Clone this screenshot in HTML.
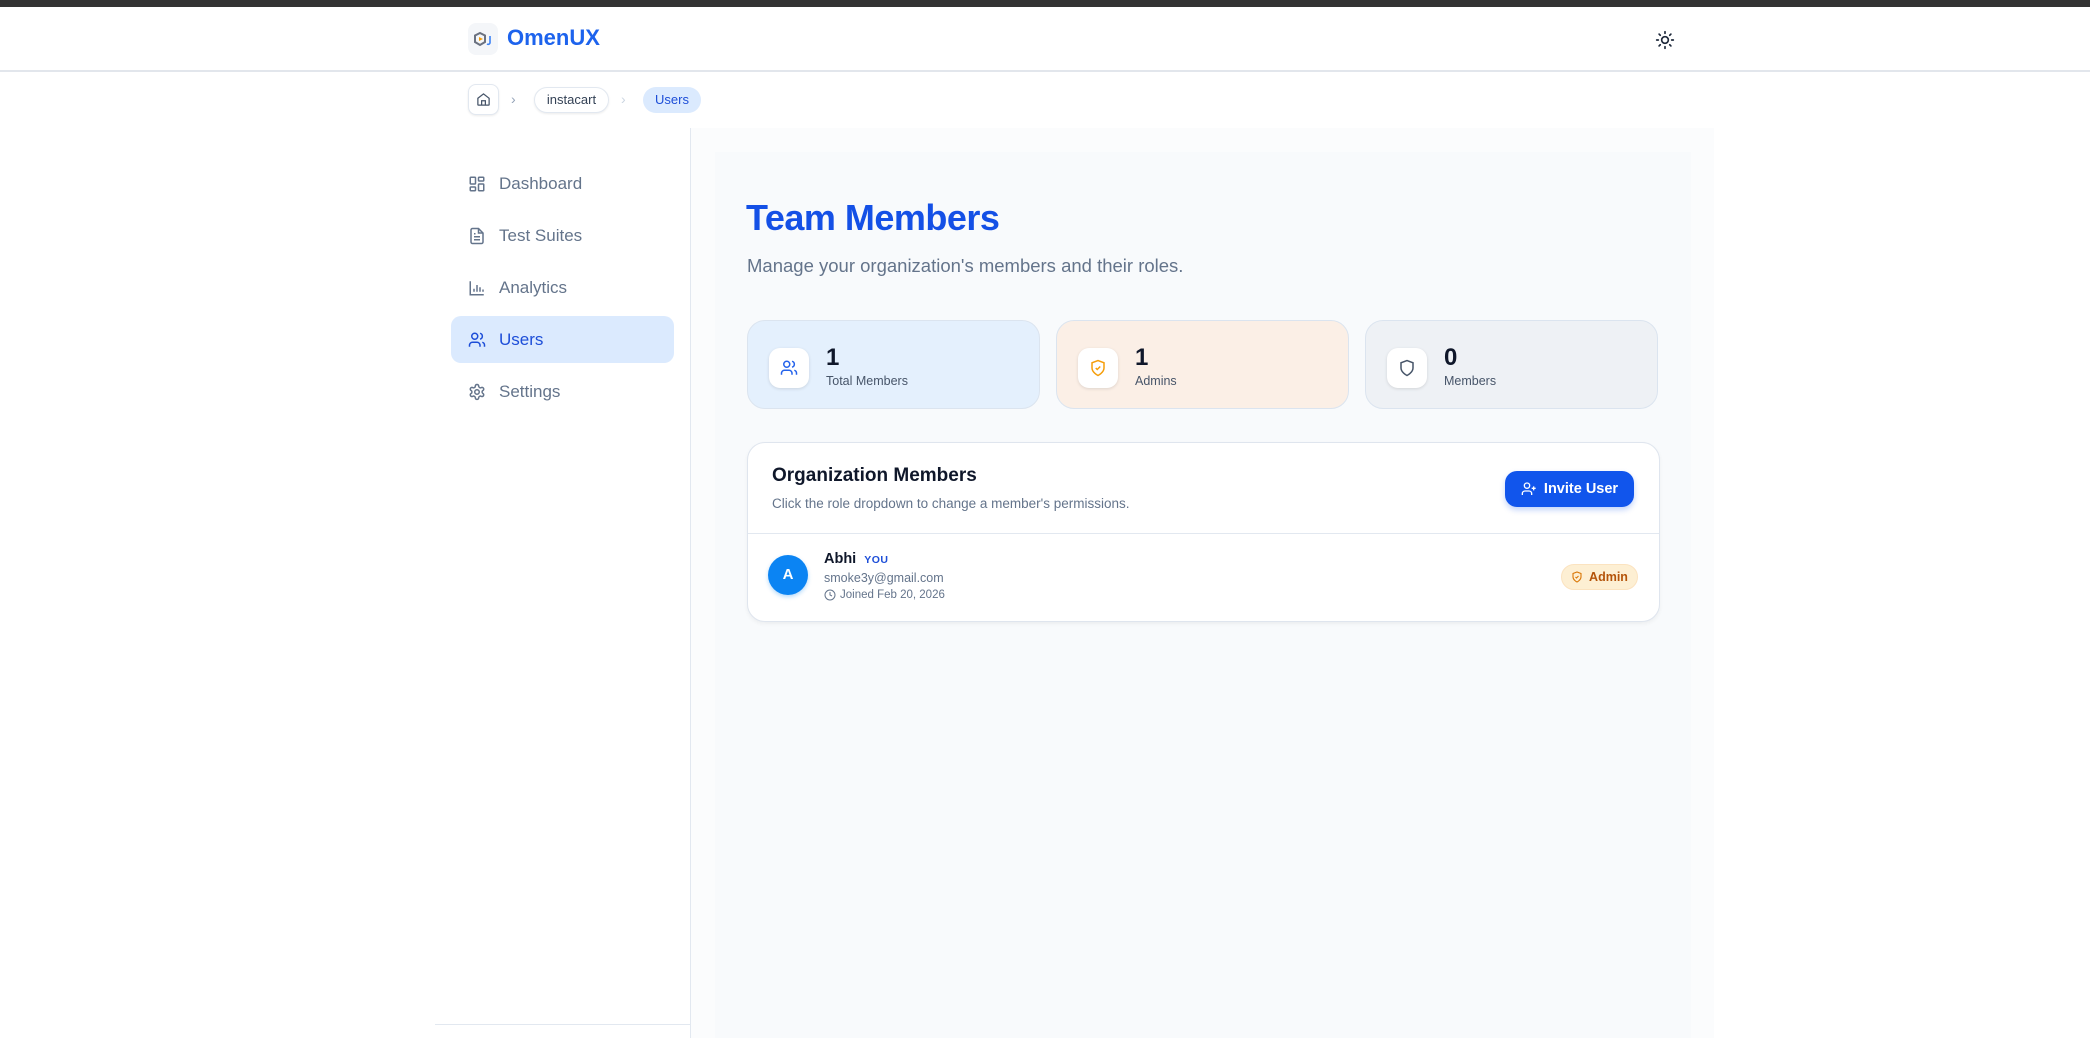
<!DOCTYPE html>
<html><head><meta charset="utf-8"><style>
*{box-sizing:border-box;margin:0;padding:0}
body{width:2090px;height:1038px;overflow:hidden;background:#fff;font-family:"Liberation Sans",sans-serif;position:relative;color:#0f172a}
.a{position:absolute}
svg{display:block}
.nav{position:absolute;left:451px;width:223px;height:47px;border-radius:10px;display:flex;align-items:center;padding-left:17px;font-size:17px;color:#64748b}
.nav svg{margin-right:13px}
.card{position:absolute;top:320px;height:89px;width:293px;border-radius:18px;border:1px solid #dbe4ef}
.ib{position:absolute;left:21px;top:27px;width:40px;height:40px;border-radius:11px;background:#fff;box-shadow:0 1px 3px rgba(0,0,0,.12);display:flex;align-items:center;justify-content:center}
.num{position:absolute;left:78px;top:23px;font-size:24px;font-weight:bold;color:#0f172a}
.lbl{position:absolute;left:78px;top:53px;font-size:12.5px;color:#475569}
</style></head><body>
<div class="a" style="left:0;top:0;width:2090px;height:7px;background:#333"></div>
<div class="a" style="left:0;top:70px;width:2090px;height:2px;background:#e2e6ec"></div>
<div class="a" style="left:468px;top:23px;width:30px;height:32px;border-radius:8px;background:#f4f6f9;display:flex;align-items:center;justify-content:center">
<svg width="22" height="16" viewBox="0 0 22 16"><path d="M8 2 L13 4.5 V11 L8 14 L3 11 V4.5 Z" fill="none" stroke="#6b7280" stroke-width="2"/><path d="M7 6 L11 8 L7 10 Z" fill="#f59e0b"/><path d="M18 5v7a2 2 0 0 1-3 1" fill="none" stroke="#3b82f6" stroke-width="1.6"/></svg></div>
<div class="a" style="left:507px;top:25px;font-size:22px;font-weight:bold;color:#1d63ed">OmenUX</div>
<svg class="a" style="left:1655px;top:30px" width="20" height="20" viewBox="0 0 24 24" fill="none" stroke="#1e293b" stroke-width="2" stroke-linecap="round"><circle cx="12" cy="12" r="4"/><path d="M12 2v2M12 20v2M4.9 4.9l1.4 1.4M17.7 17.7l1.4 1.4M2 12h2M20 12h2M6.3 17.7l-1.4 1.4M19.1 4.9l-1.4 1.4"/></svg>

<div class="a" style="left:468px;top:84px;width:31px;height:31px;border-radius:8px;border:1px solid #e2e8f0;background:#fff;box-shadow:0 1px 2px rgba(0,0,0,.08);display:flex;align-items:center;justify-content:center"><svg width="15" height="15" viewBox="0 0 24 24" fill="none" stroke="#475569" stroke-width="2"><path d="M3 10l9-7 9 7v10a1 1 0 0 1-1 1H4a1 1 0 0 1-1-1z"/><path d="M9 21v-7h6v7"/></svg></div>
<div class="a" style="left:511px;top:91px;color:#94a3b8;font-size:14px">›</div>
<div class="a" style="left:534px;top:87px;width:75px;height:26px;border-radius:13px;border:1px solid #e2e8f0;box-shadow:0 1px 2px rgba(0,0,0,.08);font-size:13px;color:#334155;text-align:center;line-height:24px">instacart</div>
<div class="a" style="left:621px;top:91px;color:#cbd5e1;font-size:14px">›</div>
<div class="a" style="left:643px;top:87px;width:58px;height:26px;border-radius:13px;background:#dbeafe;font-size:13px;color:#1d4ed8;text-align:center;line-height:26px">Users</div>

<div class="a" style="left:690px;top:128px;width:1px;height:910px;background:#e2e8f0"></div>
<div class="a" style="left:435px;top:1024px;width:255px;height:1px;background:#e2e8f0"></div>
<div class="a" style="left:691px;top:128px;width:1023px;height:910px;background:#fbfcfd"></div>
<div class="a" style="left:715px;top:152px;width:976px;height:886px;background:#f8fafc"></div>

<div class="nav" style="top:160px"><svg width="18" height="18" viewBox="0 0 24 24" fill="none" stroke="#64748b" stroke-width="2"><rect x="3" y="3" width="7" height="9" rx="1"/><rect x="14" y="3" width="7" height="5" rx="1"/><rect x="14" y="12" width="7" height="9" rx="1"/><rect x="3" y="16" width="7" height="5" rx="1"/></svg>Dashboard</div>
<div class="nav" style="top:212px"><svg width="18" height="18" viewBox="0 0 24 24" fill="none" stroke="#64748b" stroke-width="2"><path d="M14 2H6a2 2 0 0 0-2 2v16a2 2 0 0 0 2 2h12a2 2 0 0 0 2-2V8z"/><path d="M14 2v6h6M8 13h8M8 17h8M8 9h2"/></svg>Test Suites</div>
<div class="nav" style="top:264px"><svg width="18" height="18" viewBox="0 0 24 24" fill="none" stroke="#64748b" stroke-width="2"><path d="M3 3v18h18M8 17v-4M12 17V8M16 17v-6M20 17v-3"/></svg>Analytics</div>
<div class="nav" style="top:316px;background:#dbeafe;color:#1d4ed8"><svg width="18" height="18" viewBox="0 0 24 24" fill="none" stroke="#1d4ed8" stroke-width="2"><circle cx="9" cy="7" r="4"/><path d="M2 21v-2a4 4 0 0 1 4-4h6a4 4 0 0 1 4 4v2M16 3.1a4 4 0 0 1 0 7.8M22 21v-2a4 4 0 0 0-3-3.9"/></svg>Users</div>
<div class="nav" style="top:368px"><svg width="18" height="18" viewBox="0 0 24 24" fill="none" stroke="#64748b" stroke-width="2"><circle cx="12" cy="12" r="3"/><path d="M12.2 2h-.4a2 2 0 0 0-2 2v.2a2 2 0 0 1-1 1.7l-.4.3a2 2 0 0 1-2 0l-.2-.1a2 2 0 0 0-2.7.7l-.2.4a2 2 0 0 0 .7 2.7l.2.1a2 2 0 0 1 1 1.7v.5a2 2 0 0 1-1 1.7l-.2.1a2 2 0 0 0-.7 2.7l.2.4a2 2 0 0 0 2.7.7l.2-.1a2 2 0 0 1 2 0l.4.3a2 2 0 0 1 1 1.7v.2a2 2 0 0 0 2 2h.4a2 2 0 0 0 2-2v-.2a2 2 0 0 1 1-1.7l.4-.3a2 2 0 0 1 2 0l.2.1a2 2 0 0 0 2.7-.7l.2-.4a2 2 0 0 0-.7-2.7l-.2-.1a2 2 0 0 1-1-1.7v-.5a2 2 0 0 1 1-1.7l.2-.1a2 2 0 0 0 .7-2.7l-.2-.4a2 2 0 0 0-2.7-.7l-.2.1a2 2 0 0 1-2 0l-.4-.3a2 2 0 0 1-1-1.7V4a2 2 0 0 0-2-2z"/></svg>Settings</div>

<div class="a" style="left:746px;top:197px;font-size:36px;font-weight:800;color:#1450e6;letter-spacing:-.5px">Team Members</div>
<div class="a" style="left:747px;top:255px;font-size:18.5px;color:#64748b">Manage your organization's members and their roles.</div>

<div class="card" style="left:747px;background:#e4f0fd"><div class="ib"><svg width="18" height="18" viewBox="0 0 24 24" fill="none" stroke="#2563eb" stroke-width="2"><circle cx="9" cy="7" r="4"/><path d="M2 21v-2a4 4 0 0 1 4-4h6a4 4 0 0 1 4 4v2M16 3.1a4 4 0 0 1 0 7.8M22 21v-2a4 4 0 0 0-3-3.9"/></svg></div><div class="num">1</div><div class="lbl">Total Members</div></div>
<div class="card" style="left:1056px;background:#fbefe6"><div class="ib"><svg width="18" height="18" viewBox="0 0 24 24" fill="none" stroke="#f59e0b" stroke-width="2"><path d="M12 22s8-4 8-10V5l-8-3-8 3v7c0 6 8 10 8 10z"/><path d="M9 12l2 2 4-4"/></svg></div><div class="num">1</div><div class="lbl">Admins</div></div>
<div class="card" style="left:1365px;background:#eef1f5"><div class="ib"><svg width="18" height="18" viewBox="0 0 24 24" fill="none" stroke="#475569" stroke-width="2"><path d="M12 22s8-4 8-10V5l-8-3-8 3v7c0 6 8 10 8 10z"/></svg></div><div class="num">0</div><div class="lbl">Members</div></div>

<div class="a" style="left:747px;top:442px;width:913px;height:180px;border-radius:18px;border:1px solid #dfe5ee;background:#fff;box-shadow:0 2px 4px rgba(0,0,0,.05)">
<div class="a" style="left:24px;top:22px;font-size:19px;font-weight:bold;color:#0f172a">Organization Members</div>
<div class="a" style="left:24px;top:53px;font-size:13.5px;color:#64748b">Click the role dropdown to change a member's permissions.</div>
<div class="a" style="left:757px;top:28px;width:129px;height:36px;border-radius:12px;background:#1155ec;box-shadow:0 3px 6px rgba(17,85,236,.25);color:#fff;font-size:14.5px;font-weight:bold;display:flex;align-items:center;justify-content:center"><svg width="16" height="16" viewBox="0 0 24 24" fill="none" stroke="#fff" stroke-width="2" style="margin-right:7px"><circle cx="9" cy="7" r="4"/><path d="M2 21v-2a4 4 0 0 1 4-4h6a4 4 0 0 1 4 4v2M19 8v6M22 11h-6"/></svg>Invite User</div>
<div class="a" style="left:0;top:90px;width:911px;height:1px;background:#e2e8f0"></div>
<div class="a" style="left:20px;top:112px;width:40px;height:40px;border-radius:50%;background:#0b84f3;box-shadow:0 2px 4px rgba(11,132,243,.3);color:#fff;font-weight:bold;font-size:15px;text-align:center;line-height:40px">A</div>
<div class="a" style="left:76px;top:108px;font-size:14.5px;font-weight:bold;color:#0f172a">Abhi <span style="color:#1d4ed8;font-size:10.5px;margin-left:4px;letter-spacing:.5px">YOU</span></div>
<div class="a" style="left:76px;top:128px;font-size:12.5px;color:#64748b">smoke3y@gmail.com</div>
<div class="a" style="left:76px;top:146px;font-size:11.5px;color:#64748b;display:flex;align-items:center"><svg width="12" height="12" viewBox="0 0 24 24" fill="none" stroke="#64748b" stroke-width="2" style="margin-right:4px"><circle cx="12" cy="12" r="10"/><path d="M12 6v6l4 2"/></svg>Joined Feb 20, 2026</div>
<div class="a" style="left:813px;top:121px;width:77px;height:26px;border-radius:13px;background:#fdefd3;border:1px solid #fbe3c0;color:#b45309;font-size:12.5px;font-weight:bold;display:flex;align-items:center;justify-content:center"><svg width="12" height="12" viewBox="0 0 24 24" fill="none" stroke="#d97706" stroke-width="2.2" style="margin-right:6px"><path d="M12 22s8-4 8-10V5l-8-3-8 3v7c0 6 8 10 8 10z"/><path d="M9 12l2 2 4-4"/></svg>Admin</div>
</div>
</body></html>
